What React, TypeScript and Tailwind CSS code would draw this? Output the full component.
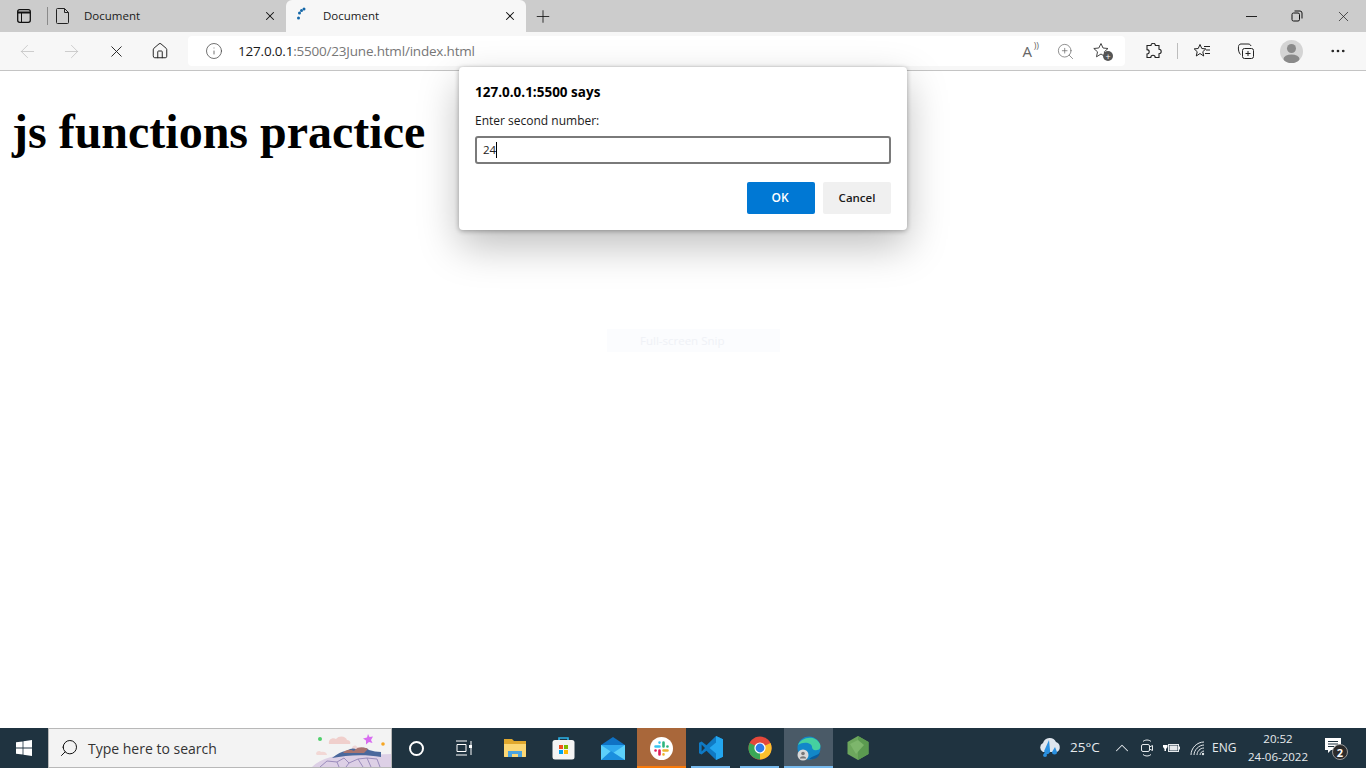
import type { ReactNode } from 'react';
import { X, Plus, ArrowLeft, ArrowRight, Home, Info, ZoomIn, MoreHorizontal, Search, ChevronUp } from 'lucide-react';

const uiFont = "font-['Open_Sans','Noto_Sans',sans-serif]";

function WindowsLogo() {
  return (
    <svg width="16" height="16" viewBox="0 0 16 16" fill="#fff">
      <path d="M0 2.3 6.6 1.4v6.2H0zM7.4 1.3 16 0v7.6H7.4zM0 8.4h6.6v6.2L0 13.7zM7.4 8.400H16V16l-8.600-1.300z" />
    </svg>
  );
}

function SearchArt() {
  return (
    <svg width="80" height="38" viewBox="0 0 80 38" className="shrink-0">
      <circle cx="9" cy="10" r="2" fill="#4fd06b" />
      <circle cx="72" cy="15" r="1.800" fill="#f5a623" />
      <path d="M18 15c-1-5 4-7 7-5 3-4 10-3 11 1 3 0 4 3 3 4z" fill="#f0cfcc" />
      <path d="M5 25c0-3 4-4 5-2 2-1 6 0 6 3H6z" fill="#f2d8d5" />
      <path d="M41 19c1-3 4-3 5-1 2 0 4 1 4 2H41z" fill="#eed6d6" />
      <path d="m57 5 1.500 3 3.500-.5-2 3.500 1.500 3-3.500-1-3 2.500v-4l-3-2 4-1z" fill="#d86cf0" />
      <path d="M1 38c6-6 14-9 24-11l55-2v13z" fill="#ddd0e6" />
      <path d="M21 29c5-4 10-7 15-7 4-3 7-3 10-1 4-3 9-3 12 0 4 1 8 2 12 2v5c-16-3-34-2-49 1z" fill="#4a689c" />
      <path d="M32 24c3-4 7-4 11-2 4-5 10-4 14-2l-4 4H38z" fill="#a8746f" />
      <path d="M9 38l7-6 10 1 2 5M26 33l7-4 5 5-3 4M38 34l9-4 5 8M47 30l9-1 4 9M56 29l10 1 3 8" stroke="#9a8cbc" strokeWidth="1" fill="none" />
    </svg>
  );
}

function TaskButton({ active, running, hot, children }: { active?: boolean; running?: boolean; hot?: boolean; children: ReactNode }) {
  return (
    <div className={`relative flex h-10 w-[49px] items-center justify-center ${hot ? 'bg-[#a9673a]' : active ? 'bg-[#4a5a67]' : ''}`}>
      {children}
      {hot && <span className="absolute inset-x-0 bottom-0 h-[2px] bg-[#f77a0c]" />}
      {running && <span className="absolute inset-x-[5px] bottom-0 h-[2px] bg-[#76b9ed]" />}
      {active && <span className="absolute inset-x-0 bottom-0 h-[2px] bg-[#76b9ed]" />}
    </div>
  );
}

function AppIcons() {
  return (
    <div className="flex">
      <TaskButton>
        <svg width="22" height="20" viewBox="0 0 22 20">
          <path d="M0 1h8l2 2h12v16H0z" fill="#e0a82e" />
          <path d="M0 6h22v12a1 1 0 0 1-1 1H1a1 1 0 0 1-1-1z" fill="#fbd775" />
          <path d="M4 19v-6h14v6h-4v-3H8v3z" fill="#4aa3df" />
        </svg>
      </TaskButton>
      <TaskButton>
        <svg width="23" height="24" viewBox="0 0 23 24">
          <path d="M7 5V2h9v3" fill="none" stroke="#2bb3e8" strokeWidth="1.600" />
          <rect x="0.500" y="4" width="22" height="19.500" rx="2.500" fill="#f4f4f4" />
          <rect x="7" y="9" width="4" height="4" fill="#f25022" />
          <rect x="12" y="9" width="4" height="4" fill="#7fba00" />
          <rect x="7" y="14" width="4" height="4" fill="#00a4ef" />
          <rect x="12" y="14" width="4" height="4" fill="#ffb900" />
        </svg>
      </TaskButton>
      <TaskButton>
        <svg width="24" height="23" viewBox="0 0 24 23">
          <path d="M0 8 12 0l12 8v15H0z" fill="#0f72c4" />
          <path d="M0 8h24v15H0z" fill="#2ea8ee" />
          <path d="M0 8l12 8 12-8v15H0z" fill="#5cd0fa" />
          <path d="M0 23l10-9 14 9z" fill="#1b8fde" />
        </svg>
      </TaskButton>
      <TaskButton hot>
        <div className="flex h-[23px] w-[23px] items-center justify-center rounded-full bg-white">
          <svg width="15" height="15" viewBox="0 0 15 15" strokeLinecap="round" strokeWidth="2.600" fill="none">
            <path d="M1.500 5.500H5.500M5.500 1.500v.1" stroke="#36c5f0" />
            <path d="M9.500 1.500V5.500M13.500 5.500h-.1" stroke="#2eb67d" />
            <path d="M13.500 9.500H9.500M9.500 13.500v-.1" stroke="#ecb22e" />
            <path d="M5.500 13.500V9.500M1.500 9.500h.1" stroke="#e01e5a" />
          </svg>
        </div>
      </TaskButton>
      <TaskButton running>
        <svg width="24" height="24" viewBox="0 0 24 24">
          <path d="M17 0l7 3.200v17.600L17 24 7.500 14.800 2.600 18.600 0 17.300V6.700l2.600-1.300 4.900 3.800z" fill="#0f7ac4" />
          <path d="M17 0l7 3.200v17.600L17 24zM17 6.500 10.500 12l6.500 5.500z" fill="#23a6ef" fillRule="evenodd" />
          <path d="M2.600 8.500v7L6 12z" fill="#1f3340" />
        </svg>
      </TaskButton>
      <TaskButton running>
        <svg width="24" height="24" viewBox="0 0 24 24">
          <circle cx="12" cy="12" r="11.500" fill="#e5483b" />
          <path d="M12 12 22.500 7A11.500 11.500 0 0 1 12 23.500z" fill="#fbc02d" />
          <path d="M12 12 12 23.500A11.500 11.500 0 0 1 1.600 7z" fill="#3aa757" />
          <circle cx="12" cy="12" r="5.600" fill="#fff" />
          <circle cx="12" cy="12" r="4.400" fill="#2f7be8" />
        </svg>
      </TaskButton>
      <TaskButton active>
        <svg width="24" height="25" viewBox="0 0 24 25">
          <circle cx="12" cy="12" r="11.500" fill="#1287c9" />
          <path d="M1 9C4 1 18-2 23 8c1 3 0 6-3 6-3 1-5-1-5-3 0-4-8-6-14-2z" fill="#45d0a0" />
          <path d="M12 23c6 1 10-2 11-6-4 3-8 3-11 6z" fill="#0b5c9e" />
          <circle cx="6" cy="19" r="5.500" fill="#d8d8d8" />
          <circle cx="6" cy="17.500" r="1.800" fill="#777" />
          <path d="M2.800 22.500c.5-3 6-3 6.400 0z" fill="#777" />
        </svg>
      </TaskButton>
      <TaskButton>
        <svg width="22" height="24" viewBox="0 0 22 24">
          <path d="M11 0l10.500 6v12L11 24 .5 18V6z" fill="#6da75d" />
          <path d="M11 0l10.500 6v12L11 24z" fill="#5b9a50" />
          <path d="M3 8l8-4 6 5-8 9z" fill="#7db66c" />
        </svg>
      </TaskButton>
    </div>
  );
}

function Tray() {
  return (
    <div className="ml-auto flex h-10 items-center text-[#e6eaed]">
      <svg width="24" height="22" viewBox="0 0 24 22" className="mr-[8px]">
        <path d="M5 15a5 5 0 0 1 0-9 7 7 0 0 1 13-1 5.500 5.500 0 0 1 1 10z" fill="#dfe6ee" />
        <path d="M11 3 7 12a3 3 0 1 0 5 1zM17 10l-3 5a2.500 2.500 0 1 0 5 0zM7 15l-2 3a2 2 0 1 0 4 0z" fill="#2a90e0" />
      </svg>
      <span className={`${uiFont} w-[39px] text-[13.500px] leading-none`}>25°C</span>
      <div className="flex w-[26px] justify-center">
        <ChevronUp size={22} strokeWidth={1.100} />
      </div>
      <div className="flex w-[24px] justify-center">
        <svg width="14" height="18" viewBox="0 0 14 18" fill="none" stroke="#e6eaed" strokeWidth="1">
          <path d="M3 2.500c2-2 6-2 8 0M3 15.500c2 2 6 2 8 0" />
          <rect x="1.500" y="5.500" width="8" height="7" rx="1.500" />
          <path d="M9.500 8l3-1.500v5l-3-1.500" />
        </svg>
      </div>
      <div className="flex w-[24px] justify-center">
        <svg width="17" height="12" viewBox="0 0 17 12">
          <path d="M1 0v3M3.500 0v3M0 3h4.500v2L3 7v2H1.500V7L0 5z" fill="#fff" />
          <rect x="5.500" y="2.500" width="10" height="7" fill="none" stroke="#e6eaed" />
          <rect x="6.500" y="3.500" width="8" height="5" fill="#e6eaed" />
          <rect x="16" y="4.500" width="1" height="3" fill="#e6eaed" />
        </svg>
      </div>
      <div className="flex w-[28px] justify-center">
        <svg width="15" height="15" viewBox="0 0 15 15" fill="none" stroke="#e6eaed" strokeWidth="1">
          <path d="M1 14C1 7 7 1 14 1M4 14c0-5 5-10 10-10M7 14c0-3.500 3-7 7-7M10 14c0-2 2-4 4-4" />
          <circle cx="13" cy="13" r="1.200" fill="#e6eaed" stroke="none" />
        </svg>
      </div>
      <span className={`${uiFont} ml-[1px] w-[30px] text-[12px] leading-none`}>ENG</span>
      <div className={`${uiFont} flex w-[72px] flex-col items-center text-[11.500px] leading-[18px]`}>
        <span>20:52</span>
        <span className="whitespace-nowrap">24-06-2022</span>
      </div>
      <div className="relative ml-[11px] mr-[19px] flex h-10 w-[22px] items-center">
        <svg width="17" height="17" viewBox="0 0 17 17" className="-mt-[4px]">
          <path d="M0 0h16v12H6l-3 3v-3H0z" fill="#fff" />
          <path d="M3 3.500h10M3 6h10M3 8.500h6" stroke="#1f3340" />
        </svg>
        <span className={`${uiFont} absolute left-[7px] top-[16px] flex h-[16px] w-[16px] items-center justify-center rounded-full border border-[#999] bg-[#2b2b2b] text-[11px] font-bold leading-none text-white`}>2</span>
      </div>
    </div>
  );
}

export default function App() {
  return (
    <div className={`relative flex h-screen min-h-[768px] w-[1366px] flex-col overflow-hidden bg-white ${uiFont}`}>
      {/* tab strip */}
      <div className="flex h-[32px] shrink-0 bg-[#cccccc] text-[#1a1a1a]">
        <div className="flex w-[47px] items-center justify-center">
          <svg width="16" height="16" viewBox="0 0 16 16" fill="none" stroke="#111" strokeWidth="1.300">
            <rect x="1.700" y="1.700" width="12.600" height="12.600" rx="2" />
            <path d="M1.700 4.500h12.600" strokeWidth="2" />
            <path d="M5.500 5v9" strokeWidth="1" />
          </svg>
        </div>
        <div className="my-[7px] w-px bg-[#8a8a8a]" />
        <div className="flex w-[238px] items-center pl-[8px] pr-[9px]">
          <svg width="14" height="16" viewBox="0 0 14 16" fill="none" stroke="#222" strokeWidth="1">
            <path d="M1.500.5h7l4 4v10a1 1 0 0 1-1 1h-10a1 1 0 0 1-1-1v-13a1 1 0 0 1 1-1zM8.500.5v4h4" />
          </svg>
          <span className="ml-[14px] flex-1 text-[11.500px] leading-none">Document</span>
          <X size={14} strokeWidth={1.800} className="text-[#111]" />
        </div>
        <div className="flex h-[32px] w-[240px] items-center rounded-t-[6px] bg-[#f7f7f7] pl-[10px] pr-[9px]">
          <svg width="10" height="14" viewBox="0 0 10 14" fill="#1467a8" className="-mt-[4px]">
            <circle cx="8" cy="2" r="1.500" />
            <circle cx="5.500" cy="3.500" r="1.500" />
            <circle cx="3.500" cy="6" r="1.500" />
            <circle cx="2.500" cy="11" r="1.500" />
          </svg>
          <span className="ml-[17px] flex-1 text-[11.500px] leading-none">Document</span>
          <X size={14} strokeWidth={1.800} className="text-[#111]" />
        </div>
        <div className="ml-[7px] flex w-[20px] items-center justify-center">
          <Plus size={23} strokeWidth={1} className="text-[#111]" />
        </div>
        <div className="ml-auto flex">
          <div className="flex w-[46px] items-center justify-center">
            <svg width="11" height="1" viewBox="0 0 11 1"><path d="M0 0h11v1H0z" fill="#222" /></svg>
          </div>
          <div className="flex w-[46px] items-center justify-center">
            <svg width="12" height="12" viewBox="0 0 12 12" fill="none" stroke="#111">
              <rect x="1" y="3" width="7.500" height="8" rx="1.500" />
              <path d="M3.500 1h5.500a2 2 0 0 1 2 2v5.500" />
            </svg>
          </div>
          <div className="flex w-[46px] items-center justify-center"><X size={17} strokeWidth={1} /></div>
        </div>
      </div>

      {/* toolbar */}
      <div className="flex h-[39px] shrink-0 items-center border-b border-[#c4c4c4] bg-[#f7f7f7]">
        <div className="ml-[16px] flex w-[22px] justify-center"><ArrowLeft size={21} strokeWidth={0.900} className="text-[#c0c0c0]" /></div>
        <div className="ml-[22px] flex w-[22px] justify-center"><ArrowRight size={21} strokeWidth={0.900} className="text-[#c0c0c0]" /></div>
        <div className="ml-[23px] flex w-[22px] justify-center"><X size={19} strokeWidth={1.200} className="text-[#222]" /></div>
        <div className="ml-[22px] flex w-[22px] justify-center"><Home size={18} strokeWidth={1.300} className="text-[#222]" /></div>
        <div className="ml-[17px] flex h-[30px] w-[937px] items-center rounded-[4px] bg-white pl-[17px]">
          <Info size={18} strokeWidth={1} className="text-[#444]" />
          <span className="ml-[15px] mt-[1px] text-[13.500px] leading-none tracking-[-0.2px] text-[#777]">
            <span className="text-[#1a1a1a]">127.0.0.1</span>:5500/23June.html/index.html
          </span>
          <div className="ml-auto flex items-center text-[#666]">
            <div className="relative mr-[24px] text-[15px] leading-none">A<span className="absolute -right-[7px] -top-[3px] text-[9px]">))</span></div>
            <ZoomIn size={19} strokeWidth={0.900} className="mr-[18px]" />
            <div className="relative mr-[14px]">
              <svg width="18" height="18" viewBox="0 0 18 18" fill="none" stroke="#444" strokeWidth="1">
                <path d="m8 1.500 2 4.500 5 .5-3.700 3.300 1 5L8 12l-4.500 2.800 1-5L.8 6.500l5-.5z" />
              </svg>
              <span className="absolute -bottom-[1px] -right-[2px] flex h-[10px] w-[10px] items-center justify-center rounded-full bg-[#555] text-[9px] leading-none text-white">+</span>
            </div>
          </div>
        </div>
        <div className="ml-[19px] flex w-[18px] justify-center">
          <svg width="17" height="17" viewBox="0 0 17 17" fill="none" stroke="#222" strokeWidth="1.100">
            <path d="M6 2.500a2.200 2.200 0 0 1 4.400 0H14v3.800a2.200 2.200 0 0 1 0 4.400V14.500h-3.800a2.200 2.200 0 0 0-4.400 0H2v-3.500a2.200 2.200 0 0 0 0-4.400V2.500z" />
          </svg>
        </div>
        <div className="ml-[15px] h-[16px] w-px bg-[#bdbdbd]" />
        <div className="ml-[15px] flex w-[18px] justify-center">
          <svg width="18" height="17" viewBox="0 0 18 17" fill="none" stroke="#222" strokeWidth="1">
            <path d="m7 1.500 1.800 4 4 .4-3 2.800.9 4.300L7 10.500l-3.700 2.500.9-4.300-3-2.800 4-.4zM11 3.500h6M13 7h4M12 10.500h5" />
          </svg>
        </div>
        <div className="ml-[26px] flex w-[18px] justify-center">
          <svg width="18" height="18" viewBox="0 0 18 18" fill="none" stroke="#222" strokeWidth="1">
            <rect x="5.500" y="6.500" width="11" height="10" rx="2" />
            <path d="M11 9v5M8.500 11.500h5M3.500 12.500C2 11 1 8 1.500 4.500c.2-1.500 1-2.500 2.500-2.500h7c1.500 0 2.500.5 3 2" />
          </svg>
        </div>
        <div className="ml-[25px] flex h-[23px] w-[23px] items-center justify-center overflow-hidden rounded-full bg-[#d4d4d4]">
          <svg width="23" height="23" viewBox="0 0 23 23" fill="#8a8a8a">
            <circle cx="11.500" cy="8.500" r="4.500" />
            <ellipse cx="11.500" cy="19" rx="8" ry="4.500" />
          </svg>
        </div>
        <div className="ml-[25px] flex w-[20px] justify-center"><MoreHorizontal size={18} strokeWidth={1.600} className="text-[#222]" /></div>
      </div>

      {/* page */}
      <main className="min-h-0 flex-1 bg-white px-[12px] font-['Liberation_Serif',serif]">
        <h1 className="mt-[33px] text-[48px] font-bold leading-[55px] text-black">js functions practice</h1>
      </main>

      {/* faded snip label left over in the capture */}
      <div className="absolute left-[607px] top-[329px] flex h-[23px] w-[173px] items-center bg-[#fbfcfe] pl-[33px] text-[11.500px] text-[#eff1f6]">Full-screen Snip</div>

      {/* prompt dialog */}
      <div className="absolute left-[459px] top-[67px] w-[448px] rounded-[4px] bg-white px-[16px] pb-[16px] pt-[16px] shadow-[0_1px_5px_rgba(0,0,0,0.32),0_16px_40px_rgba(0,0,0,0.26)]">
        <p className="text-[13.500px] font-bold leading-[18px] text-black">127.0.0.1:5500 says</p>
        <p className="mt-[11px] text-[12px] leading-[18px] text-[#1a1a1a]">Enter second number:</p>
        <div className="mt-[6px] flex h-[28px] items-center rounded-[3px] border-2 border-[#7a7a7a] pl-[6px] text-[11.500px] leading-none text-[#222]">
          24<span className="h-[16px] w-px bg-black" />
        </div>
        <div className="mt-[18px] flex justify-end gap-[8px]">
          <button className="h-[32px] w-[68px] rounded-[2px] bg-[#0078d4] pr-[2px] text-[12px] font-semibold text-white">OK</button>
          <button className="h-[32px] w-[68px] rounded-[2px] bg-[#f0f0f0] text-[11.500px] font-semibold text-[#1a1a1a]">Cancel</button>
        </div>
      </div>

      {/* taskbar */}
      <footer className="flex h-10 shrink-0 items-center bg-[#1f3340]">
        <div className="flex h-10 w-[48px] items-center justify-center"><WindowsLogo /></div>
        <div className="flex h-10 w-[344px] items-center overflow-hidden border border-[#b8b8b8] bg-[#f3f3f3] pl-[10px]">
          <Search size={20} strokeWidth={1.200} className="-scale-x-100 text-[#111]" />
          <span className={`${uiFont} ml-[9px] mt-[1px] flex-1 whitespace-nowrap text-[14px] leading-none text-[#333]`}>Type here to search</span>
          <SearchArt />
        </div>
        <div className="flex w-[48px] justify-center">
          <span className="h-[15px] w-[15px] rounded-full border-2 border-white" />
        </div>
        <div className="flex w-[50px] pl-[15px]">
          <svg width="17" height="16" viewBox="0 0 17 16" fill="none" stroke="#fff" strokeWidth="1">
            <path d="M1 1h11M1 15h11M2 4.500h9v7H2zM16 1v14" />
            <rect x="14" y="5" width="3" height="3" fill="#fff" stroke="none" />
          </svg>
        </div>
        <AppIcons />
        <Tray />
      </footer>
    </div>
  );
}
